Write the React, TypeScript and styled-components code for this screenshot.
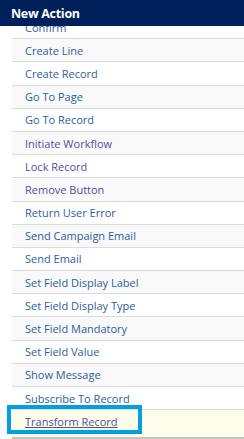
import * as React from 'react';
import styled, { createGlobalStyle } from 'styled-components';

const { useRef, useLayoutEffect } = React;

const GlobalStyle = createGlobalStyle`
  html, body {
    margin: 0;
    padding: 0;
    background: #ffffff;
  }
  body {
    font-family: "Open Sans", "Noto Sans", Arial, sans-serif;
  }
`

const Panel = styled.div`
  display: flex;
  flex-direction: column;
  width: 244px;
  height: 439px;
  overflow: hidden;
`

const Header = styled.div`
  flex: none;
  height: 26px;
  display: flex;
  align-items: center;
  padding-left: 11px;
  background-color: #00205b;
  color: #ffffff;
  font-size: 12.5px;
  font-weight: 700;
  letter-spacing: -0.3px;
`

const Scroller = styled.div`
  flex: 1;
  overflow: hidden;
`

const List = styled.ul`
  list-style: none;
  margin: 0;
  padding: 0 0 0 12px;
`

const Item = styled.li<{ $striped: boolean; $hover?: boolean }>`
  position: relative;
  display: flex;
  align-items: center;
  height: ${p => (p.$hover ? '22.4px' : '22.2px')};
  padding: ${p => (p.$hover ? '0 0 4px 13px' : '0 0 0 13px')};
  background-color: ${p => (p.$hover ? '#fdfdeb' : p.$striped ? '#f9f9f9' : '#ffffff')};
  border-bottom: ${p => (p.$hover ? '2px solid #c4c4c4' : '1px solid #dcdcdc')};
`

const ActionLink = styled.a<{ $visited?: boolean; $hover?: boolean }>`
  font-size: 11px;
  color: ${p => (p.$visited ? '#574b9c' : '#2f5c9e')};
  text-decoration: ${p => (p.$hover ? 'underline' : 'none')};
  cursor: pointer;
  white-space: nowrap;
`

// annotation box drawn round the hovered entry
const Highlight = styled.span`
  position: absolute;
  left: -5px;
  top: -5px;
  width: 127px;
  height: 21px;
  border: 4px solid #02a0e3;
  pointer-events: none;
`

const actions: { label: string; visited?: boolean }[] = [
  { label: 'Confirm' },
  { label: 'Create Line' },
  { label: 'Create Record' },
  { label: 'Go To Page' },
  { label: 'Go To Record' },
  { label: 'Initiate Workflow', visited: true },
  { label: 'Lock Record', visited: true },
  { label: 'Remove Button', visited: true },
  { label: 'Return User Error' },
  { label: 'Send Campaign Email' },
  { label: 'Send Email' },
  { label: 'Set Field Display Label' },
  { label: 'Set Field Display Type' },
  { label: 'Set Field Mandatory' },
  { label: 'Set Field Value' },
  { label: 'Show Message' },
  { label: 'Subscribe To Record' },
  { label: 'Transform Record', visited: true },
];

export default function App() {
  const scrollRef = useRef<HTMLDivElement>(null);

  // the list is shown scrolled a little, "Confirm" half under the header
  useLayoutEffect(() => {
    if (scrollRef.current) scrollRef.current.scrollTop = 12;
  }, []);

  const hovered = actions.length - 1;

  return (
    <>
      <GlobalStyle />
      <Panel>
        <Header>New Action</Header>
        <Scroller ref={scrollRef}>
          <List>
            {actions.map((a, i) => (
              <Item key={a.label} $striped={i % 2 === 1} $hover={i === hovered}>
                <ActionLink $visited={a.visited} $hover={i === hovered}>
                  {a.label}
                </ActionLink>
                {i === hovered && <Highlight />}
              </Item>
            ))}
          </List>
        </Scroller>
      </Panel>
    </>
  );
}
